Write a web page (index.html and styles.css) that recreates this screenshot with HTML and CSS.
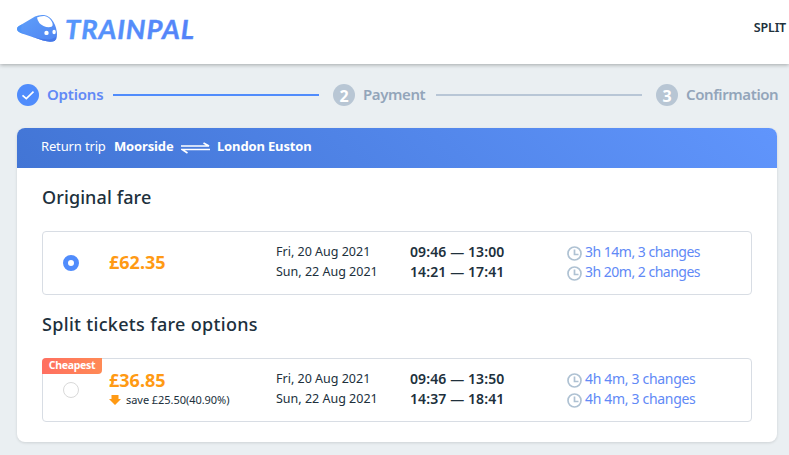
FILE: index.html
```html
<!DOCTYPE html>
<html lang="en">
<head>
  <meta charset="UTF-8">
  <title>TrainPal - Options</title>
  <link rel="stylesheet" href="styles.css">
</head>
<body>
  <header class="header">
    <div class="logo">
      <svg class="logo-train" width="41" height="28" viewBox="0 0 41 28">
        <defs>
          <linearGradient id="train" x1="0" y1="0" x2="1" y2="1">
            <stop offset="0" stop-color="#5fa0fa"/>
            <stop offset="1" stop-color="#5085f2"/>
          </linearGradient>
        </defs>
        <path fill="url(#train)" d="M2 12 L18 2.500 Q22 0.500 27 1 Q33 1.800 36.500 8 Q40 14 40 21 Q40 25 37.500 27 Q33 28.500 26 26.500 L5 19.500 Q0 17.500 0 15 Q0 13.200 2 12Z"/>
        <path fill="#4e94f8" d="M5 10.500 Q3 16 6 19.700 L3 18.500 Q0 17 0 15 Q0 13 2 12Z"/>
        <path fill="#4678e8" d="M6 19.500 Q19 24.500 29 25.300 Q36 26 39.500 22 Q39.500 25.500 37.500 27 Q33 28.500 26 26.500Z"/>
        <path fill="#fff" d="M20 3.500 Q23 1.800 27.500 2 Q32.500 3 35 8 Q36.500 11.500 34.500 12.800 Q31 14 26.500 12 Q21 9.500 20 3.500Z"/>
        <circle fill="#fff" cx="29.500" cy="18.900" r="2.200"/>
        <ellipse fill="#fff" cx="37.100" cy="18" rx="1.700" ry="2.200"/>
      </svg>
      <svg class="logo-name" width="150" height="34" viewBox="0 0 150 34">
        <defs>
          <linearGradient id="name" x1="0" y1="0" x2="1" y2="0">
            <stop offset="0" stop-color="#5699fc"/>
            <stop offset="1" stop-color="#5580f8"/>
          </linearGradient>
        </defs>
        <text x="0" y="24" textLength="129" lengthAdjust="spacing" fill="url(#name)">TRAINPAL</text>
      </svg>
    </div>
    <nav class="nav">SPLIT</nav>
  </header>

  <main class="main">
    <div class="steps">
      <div class="step active">
        <span class="step-num">
          <svg width="22" height="22" viewBox="0 0 22 22"><path d="M5.500 11.300 L9.300 14.600 L16.500 7.700" fill="none" stroke="#fff" stroke-width="1.700"/></svg>
        </span>
        <span class="step-name">Options</span>
      </div>
      <div class="line active"></div>
      <div class="step">
        <span class="step-num">2</span>
        <span class="step-name">Payment</span>
      </div>
      <div class="line"></div>
      <div class="step">
        <span class="step-num">3</span>
        <span class="step-name">Confirmation</span>
      </div>
    </div>

    <section class="card">
      <div class="card-head">
        <span class="trip">Return trip</span>
        <b class="from">Moorside</b>
        <svg class="arrows" width="29" height="12" viewBox="0 0 29 12">
          <path fill="none" stroke="#fff" stroke-width="1.700" d="M0 4 H28 L22.500 1 M29 7.500 H1 L6.500 11"/>
        </svg>
        <b class="to">London Euston</b>
      </div>

      <div class="card-body">
        <h2 class="title">Original fare</h2>
        <div class="fare">
          <span class="radio checked"></span>
          <div class="price-col">
            <div class="price">£62.35</div>
          </div>
          <div class="dates">
            <div>Fri, 20 Aug 2021</div>
            <div>Sun, 22 Aug 2021</div>
          </div>
          <div class="times">
            <div>09:46 — 13:00</div>
            <div>14:21 — 17:41</div>
          </div>
          <div class="durations long">
            <div><svg class="clock" width="15" height="15" viewBox="0 0 15 15"><circle cx="7.500" cy="7.500" r="6.500"/><path d="M7.500 3.500 V8.500 H11.500"/></svg>3h 14m, 3 changes</div>
            <div><svg class="clock" width="15" height="15" viewBox="0 0 15 15"><circle cx="7.500" cy="7.500" r="6.500"/><path d="M7.500 3.500 V8.500 H11.500"/></svg>3h 20m, 2 changes</div>
          </div>
        </div>

        <h2 class="title split">Split tickets fare options</h2>
        <div class="fare">
          <span class="tag">Cheapest</span>
          <span class="radio"></span>
          <div class="price-col">
            <div class="price">£36.85</div>
            <div class="save">
              <svg width="12" height="10" viewBox="0 0 12 10"><path fill="#ff9a14" d="M2.500 0 H9.500 V4 H12 L6 10 L0 4 H2.500Z"/></svg>
              <span>save £25.50(40.90%)</span>
            </div>
          </div>
          <div class="dates">
            <div>Fri, 20 Aug 2021</div>
            <div>Sun, 22 Aug 2021</div>
          </div>
          <div class="times">
            <div>09:46 — 13:50</div>
            <div>14:37 — 18:41</div>
          </div>
          <div class="durations">
            <div><svg class="clock" width="15" height="15" viewBox="0 0 15 15"><circle cx="7.500" cy="7.500" r="6.500"/><path d="M7.500 3.500 V8.500 H11.500"/></svg>4h 4m, 3 changes</div>
            <div><svg class="clock" width="15" height="15" viewBox="0 0 15 15"><circle cx="7.500" cy="7.500" r="6.500"/><path d="M7.500 3.500 V8.500 H11.500"/></svg>4h 4m, 3 changes</div>
          </div>
        </div>
      </div>
    </section>
  </main>
</body>
</html>
```
FILE: styles.css
```css
* {
  box-sizing: border-box;
}
body {
  margin: 0;
  height: 455px;
  overflow: hidden;
  background-color: #eaeff2;
  font-family: 'Noto Sans', 'Open Sans', sans-serif;
  color: #20303c;
  white-space: nowrap;
}
.header {
  display: flex;
  justify-content: space-between;
  height: 64px;
  padding: 14px 3px 0 17px;
  background-color: #fff;
  box-shadow: 0 1px 4px rgba(0, 0, 0, 0.3);
}
.logo {
  display: flex;
}
.logo-name {
  margin: 1px 0 0 7px;
}
.logo-name text {
  font-family: Lato, sans-serif;
  font-size: 27.5px;
  font-weight: 700;
  font-style: italic;
  stroke: #5590fb;
  stroke-width: 0.4;
}
.nav {
  padding-top: 5px;
  font-size: 12.5px;
  line-height: 18px;
  font-weight: 600;
  letter-spacing: -0.2px;
}
.main {
  padding: 20px 11px 0 17px;
}
.steps {
  display: grid;
  grid-template-columns: 96px 206px 14px 103px 206px 14px 122px;
  height: 22px;
  align-items: center;
}
.step {
  display: flex;
  align-items: center;
  color: #93a5ba;
}
.step:nth-child(3) {
  grid-column: 4;
}
.step:nth-child(5) {
  grid-column: 7;
}
.step-num {
  flex-shrink: 0;
  width: 22px;
  height: 22px;
  margin-right: 8px;
  border-radius: 50%;
  background-color: #b8c6d4;
  color: #fff;
  font-size: 16px;
  line-height: 24px;
  font-weight: 700;
  text-align: center;
}
.step-num svg {
  display: block;
}
.step-name {
  padding-bottom: 1px;
  font-size: 15px;
  line-height: 21px;
  font-weight: 600;
  letter-spacing: -0.4px;
}
.step.active {
  color: #6189f6;
}
.active .step-num {
  background-color: #508cfc;
}
.active .step-name {
  letter-spacing: -0.2px;
}
.line {
  height: 2px;
  background-color: #b8c6d6;
}
.line.active {
  background-color: #508cfc;
}
.card {
  width: 760px;
  height: 314px;
  margin-top: 22px;
  border-radius: 8px;
  background-color: #fff;
  box-shadow: 0 1px 3px rgba(0, 0, 0, 0.12);
}
.card-head {
  display: flex;
  align-items: center;
  height: 40px;
  padding: 0 24px 4px;
  border-radius: 8px 8px 0 0;
  background: linear-gradient(45deg, #4275d5, #6095fc);
  color: #fff;
  font-size: 13px;
  letter-spacing: -0.15px;
}
.trip {
  width: 73px;
}
.from {
  width: 67px;
}
.arrows {
  margin: 4px 7px 0 0;
}
.card-body {
  padding: 0 25px;
}
.title {
  margin: 0;
  padding: 16px 0 21px;
  font-size: 18px;
  line-height: 26px;
  font-weight: 500;
  letter-spacing: 0.1px;
}
.title.split {
  letter-spacing: 0.32px;
}
.fare {
  position: relative;
  display: grid;
  grid-template-columns: 46px 167px 134px 157px auto;
  width: 710px;
  height: 64px;
  padding-left: 20px;
  border: 1px solid #d8dde4;
  border-radius: 4px;
}
.radio {
  width: 16px;
  height: 16px;
  margin-top: 23px;
  border: 1px solid #d9d9d9;
  border-radius: 50%;
}
.radio.checked {
  border: 5px solid #508cfc;
}
.price-col {
  display: flex;
  flex-direction: column;
  justify-content: center;
  padding-bottom: 3px;
}
.price {
  color: #ff9a14;
  font-size: 18px;
  line-height: 22px;
  font-weight: 700;
}
.save {
  display: flex;
  align-items: center;
  gap: 5px;
  font-size: 11px;
  line-height: 18px;
  letter-spacing: -0.05px;
}
.dates, .times, .durations {
  padding-top: 10px;
  line-height: 20px;
}
.dates {
  font-size: 12.5px;
}
.times {
  font-size: 14px;
  font-weight: 600;
  letter-spacing: 0.1px;
}
.durations {
  font-size: 14px;
  color: #6189f6;
  letter-spacing: -0.32px;
}
.durations.long {
  letter-spacing: -0.5px;
}
.durations div {
  display: flex;
}
.clock {
  margin: 4px 3px 0 0;
  fill: none;
  stroke: #afc2d3;
  stroke-width: 1.7;
}
.tag {
  position: absolute;
  top: -1px;
  left: -1px;
  width: 60px;
  height: 16px;
  border-radius: 4px 0 4px 0;
  background: linear-gradient(90deg, #ff6f61, #ff8a55);
  color: #fff;
  font-size: 10.5px;
  line-height: 15px;
  font-weight: 700;
  letter-spacing: -0.3px;
  text-align: center;
}
```
